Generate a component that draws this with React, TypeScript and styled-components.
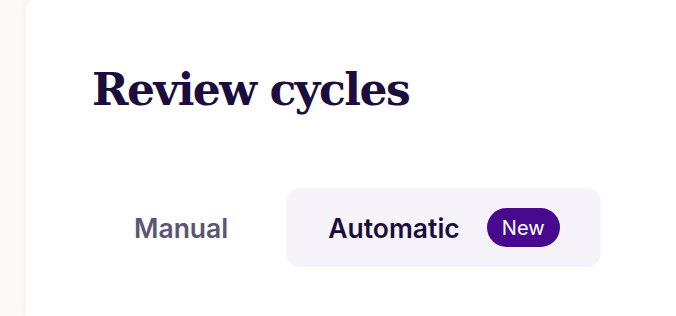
import React from "react";
import styled, { createGlobalStyle } from "styled-components";

const GlobalStyle = createGlobalStyle`
  html, body {
    margin: 0;
    padding: 0;
    background: #fdf9f7;
    overflow: hidden;
  }
  body {
    font-family: "Inter", "Liberation Sans", sans-serif;
  }
`;

const Page = styled.div`
  display: flex;
  height: 316px;
  padding-left: 26px;
  box-sizing: border-box;
  overflow: hidden;
`;

const Card = styled.section`
  flex: 1;
  background: #ffffff;
  border-radius: 9px 0 0 0;
  box-shadow: 0 0 10px rgba(60, 40, 30, 0.05);
  padding: 64px 0 0 66px;
  box-sizing: border-box;
`;

const Title = styled.h1`
  margin: 0;
  font-family: "DejaVu Serif", "Liberation Serif", serif;
  font-weight: 700;
  font-size: 44px;
  line-height: 52px;
  color: #1b0e3e;
  letter-spacing: -1.5px;
`;

const Tabs = styled.div`
  display: flex;
  gap: 17px;
  margin-top: 72px;
`;

const Tab = styled.button<{ $active?: boolean }>`
  display: flex;
  align-items: center;
  gap: 27px;
  height: 79px;
  padding: 0 41px 0 42px;
  border: none;
  border-radius: 14px;
  background: ${(p) => (p.$active ? "#f6f3fb" : "transparent")};
  color: ${(p) => (p.$active ? "#1b0e3e" : "#5c5675")};
  font-family: "Inter", "Liberation Sans", sans-serif;
  font-weight: 600;
  font-size: 26.5px;
  line-height: 26px;
  cursor: pointer;
`;

const Badge = styled.span`
  display: inline-flex;
  align-items: center;
  height: 39px;
  padding: 0 15px;
  border-radius: 20px;
  background: #470a8f;
  color: #ffffff;
  font-family: "Inter", "Liberation Sans", sans-serif;
  font-weight: 400;
  font-size: 20px;
`;

export default function App() {
  return (
    <>
      <GlobalStyle />
      <Page>
        <Card>
          <Title>Review cycles</Title>
          <Tabs>
            <Tab>Manual</Tab>
            <Tab $active>
              <span>Automatic</span>
              <Badge>New</Badge>
            </Tab>
          </Tabs>
        </Card>
      </Page>
    </>
  );
}
